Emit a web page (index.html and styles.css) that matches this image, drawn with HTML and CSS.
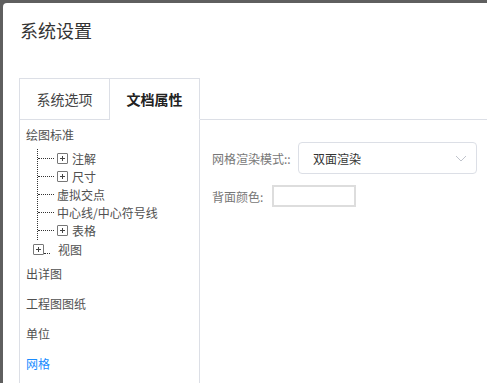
FILE: index.html
```html
<!DOCTYPE html>
<html lang="zh-CN">

<head>
    <meta charset="UTF-8">
    <meta name="viewport" content="width=device-width, initial-scale=1.0">
    <title>系统设置</title>
    <link rel="stylesheet" href="styles.css">
</head>

<body>
    <div class="dialog">
        <div class="dialogTitle">系统设置</div>

        <div class="tabs">
            <div class="tabHead">
                <div class="tab">系统选项</div>
                <div class="tab active">文档属性</div>
                <div class="tabFill"></div>
            </div>

            <div class="tabBody">
                <div class="side">
                    <div class="sideItem first">绘图标准</div>
                    <ul class="tree">
                        <li><span class="plus"></span>注解</li>
                        <li><span class="plus"></span>尺寸</li>
                        <li class="leaf">虚拟交点</li>
                        <li class="leaf">中心线/中心符号线</li>
                        <li><span class="plus"></span>表格</li>
                    </ul>
                    <div class="treeRoot"><span class="plus"></span><span class="rootDots"></span>视图</div>
                    <div class="sideItem">出详图</div>
                    <div class="sideItem">工程图图纸</div>
                    <div class="sideItem">单位</div>
                    <div class="sideItem selected">网格</div>
                </div>

                <div class="content">
                    <div class="formRow">
                        <label class="formLabel">网格渲染模式::</label>
                        <div class="select">
                            <span>双面渲染</span>
                            <svg class="arrow" width="12" height="7" viewBox="0 0 12 7">
                                <path d="M1 1 L6 6 L11 1" fill="none" stroke="#c0c4cc" stroke-width="1"/>
                            </svg>
                        </div>
                    </div>
                    <div class="formRow small">
                        <label class="formLabel short">背面颜色:</label>
                        <div class="colorBox"></div>
                    </div>
                </div>
            </div>
        </div>
    </div>
</body>

</html>
```

FILE: styles.css
```css
body {
    font-family: "Noto Sans CJK SC", "Liberation Sans", sans-serif;
    margin: 0;
    padding: 3px 0 0 3px;
    height: 383px;
    box-sizing: border-box;
    overflow: hidden;
    background-color: #5f5f5f;
}

.dialog {
    background-color: white;
    border-radius: 4px 0 0 0;
    height: 380px;
    overflow: hidden;
}

.dialogTitle {
    padding: 15px 0 0 17px;
    font-size: 18px;
    line-height: 24px;
    color: #333;
}

.tabs {
    margin: 36px 0 0 16px;
}

.tabHead {
    display: flex;
    height: 42px;
}

.tab {
    width: 89px;
    border-top: 1px solid #dcdfe6;
    border-right: 1px solid #dcdfe6;
    border-bottom: 1px solid #dcdfe6;
    font-size: 14px;
    line-height: 40px;
    text-align: center;
    color: #444;
}

.tab:first-child {
    border-left: 1px solid #dcdfe6;
}

.tab.active {
    border-bottom-color: white;
    font-weight: bold;
    color: #222;
}

.tabFill {
    flex: 1;
    border-bottom: 1px solid #dcdfe6;
}

.tabBody {
    display: flex;
    height: 300px;
}

.side {
    width: 173px;
    border-left: 1px solid #dcdfe6;
    border-right: 1px solid #dcdfe6;
    padding-left: 6px;
    font-size: 12px;
    color: #505050;
}

.sideItem {
    height: 30px;
    line-height: 30px;
}

.sideItem.first {
    height: 29px;
    line-height: 29px;
}

.sideItem.selected {
    color: #1a8cff;
}

.tree {
    list-style: none;
    margin: 0 0 0 11px;
    padding: 0;
    border-left: 1px dotted #333;
}

.tree li {
    display: flex;
    align-items: center;
    height: 18px;
    margin-bottom: 0.2px;
}

.tree li::before {
    content: '';
    width: 16px;
    border-top: 1px dotted #333;
    margin-right: 3px;
}

.plus {
    position: relative;
    width: 9px;
    height: 9px;
    border: 1px solid #777;
    border-radius: 1px;
    margin-right: 4px;
}

.plus::before,
.plus::after {
    content: '';
    position: absolute;
    background-color: #444;
}

.plus::before {
    left: 2px;
    top: 4px;
    width: 5px;
    height: 1px;
}

.plus::after {
    left: 4px;
    top: 2px;
    width: 1px;
    height: 5px;
}

.treeRoot {
    display: flex;
    align-items: center;
    height: 19px;
    padding-left: 7px;
}

.treeRoot .plus {
    margin-right: 0;
}

.rootDots {
    width: 6px;
    border-top: 1px dotted #333;
    margin: 8px 8px 0 0;
}

.content {
    flex: 1;
    padding: 22px 0 0 12px;
}

.formRow {
    display: flex;
    align-items: center;
    height: 32px;
}

.formRow.small {
    height: 22px;
    margin-top: 11px;
}

.formLabel {
    width: 86px;
    font-size: 12px;
    color: #777;
}

.formLabel.short {
    width: 60px;
}

.select {
    width: 179px;
    height: 32px;
    border: 1px solid #dcdfe6;
    border-radius: 4px;
    display: flex;
    align-items: center;
    justify-content: space-between;
    padding: 0 9px 0 14px;
    box-sizing: border-box;
    font-size: 12px;
    color: #333;
}

.colorBox {
    width: 80px;
    height: 18px;
    border: 2px solid #ddd;
}
```
